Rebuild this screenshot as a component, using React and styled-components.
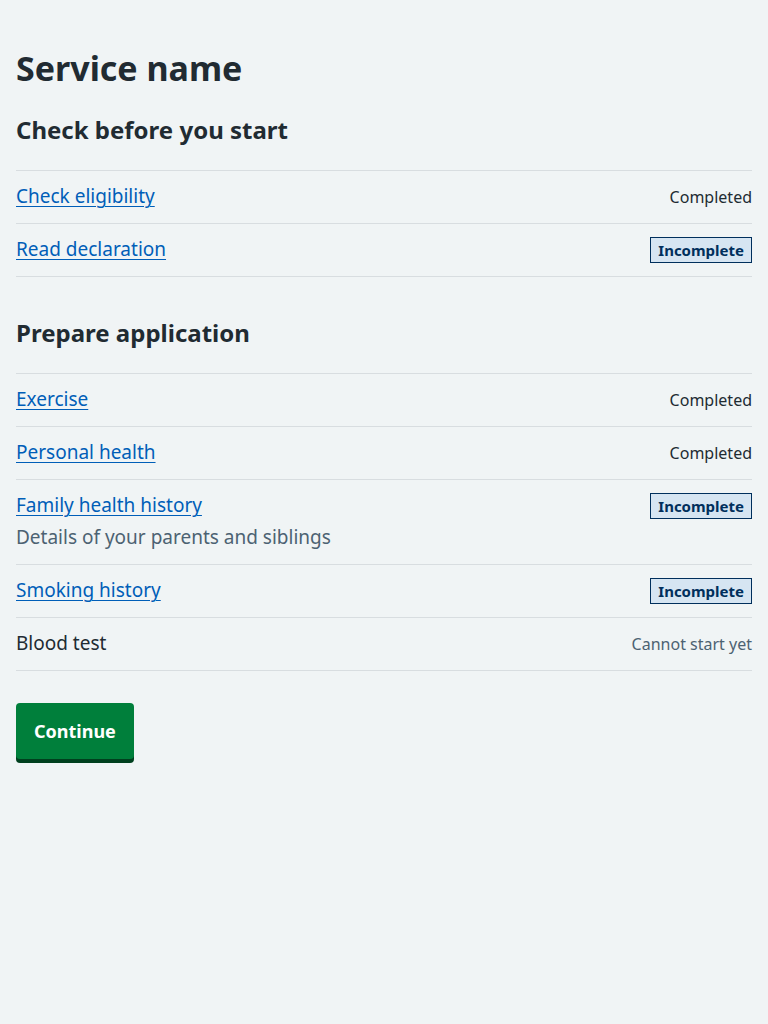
import React from "react";
import styled, { createGlobalStyle } from "styled-components";

const Global = createGlobalStyle`
  html, body { margin: 0; padding: 0; background: #f0f4f5; }
  body { font-family: "Noto Sans", "Liberation Sans", Arial, sans-serif; color: #212b32; -webkit-font-smoothing: antialiased; }
  * { box-sizing: border-box; }
`;

const Page = styled.main`
  padding: 48px 16px 40px;
  min-height: 1024px;
`;

const Title = styled.h1`
  margin: 0 0 26px;
  font-size: 34px;
  line-height: 40px;
  font-weight: 700;
`;

const SectionTitle = styled.h2`
  margin: 0 0 24px;
  font-size: 24px;
  line-height: 32px;
  font-weight: 700;
`;

const List = styled.ul`
  list-style: none;
  margin: 0 0 40px;
  padding: 0;
  border-top: 1px solid #d8dde0;
`;

const Row = styled.li`
  display: flex;
  justify-content: space-between;
  align-items: flex-start;
  gap: 16px;
  padding: 12px 0 ${(p) => (p.$hint ? 14 : 12)}px;
  border-bottom: 1px solid #d8dde0;
`;

const Name = styled.div`
  display: flex;
  flex-direction: column;
  gap: 6px;
  margin-top: -1px;
  margin-bottom: 1px;
  font-size: 19px;
  line-height: 28px;
`;

const TaskLink = styled.a`
  color: #005eb8;
  text-decoration: underline;
  text-underline-offset: 3px;
  text-decoration-thickness: 1px;
`;

const Hint = styled.span`
  color: #4c6272;
  font-size: 19px;
  line-height: 24px;
`;

const Status = styled.span`
  font-size: 16px;
  line-height: 28px;
  color: ${(p) => (p.$muted ? "#4c6272" : "#212b32")};
  white-space: nowrap;
`;

const Tag = styled.strong`
  display: inline-block;
  margin-top: 1px;
  padding: 0 7px;
  height: 26px;
  line-height: 24px;
  font-size: 15px;
  font-weight: 700;
  color: #002f5c;
  background: #d6e5f2;
  border: 1px solid #002f5c;
  white-space: nowrap;
`;

const Button = styled.button`
  margin-top: -8px;
  font-family: inherit;
  font-size: 18px;
  font-weight: 700;
  line-height: 24px;
  color: #fff;
  background: #007f3b;
  border: 0;
  border-radius: 4px;
  padding: 16px 18px;
  box-shadow: 0 4px 0 #00401e;
  cursor: pointer;
`;

const sections = [
  {
    title: "Check before you start",
    tasks: [
      { name: "Check eligibility", status: "Completed" },
      { name: "Read declaration", status: "Incomplete" },
    ],
  },
  {
    title: "Prepare application",
    tasks: [
      { name: "Exercise", status: "Completed" },
      { name: "Personal health", status: "Completed" },
      { name: "Family health history", hint: "Details of your parents and siblings", status: "Incomplete" },
      { name: "Smoking history", status: "Incomplete" },
      { name: "Blood test", status: "Cannot start yet", noLink: true },
    ],
  },
];

export default function App() {
  return (
    <>
      <Global />
      <Page>
        <Title>Service name</Title>
        {sections.map((s) => (
          <section key={s.title}>
            <SectionTitle>{s.title}</SectionTitle>
            <List>
              {s.tasks.map((t) => (
                <Row key={t.name} $hint={!!t.hint}>
                  <Name>
                    {t.noLink ? <span>{t.name}</span> : <TaskLink href="#">{t.name}</TaskLink>}
                    {t.hint && <Hint>{t.hint}</Hint>}
                  </Name>
                  {t.status === "Incomplete" ? (
                    <Tag>{t.status}</Tag>
                  ) : (
                    <Status $muted={t.noLink}>{t.status}</Status>
                  )}
                </Row>
              ))}
            </List>
          </section>
        ))}
        <Button>Continue</Button>
      </Page>
    </>
  );
}
